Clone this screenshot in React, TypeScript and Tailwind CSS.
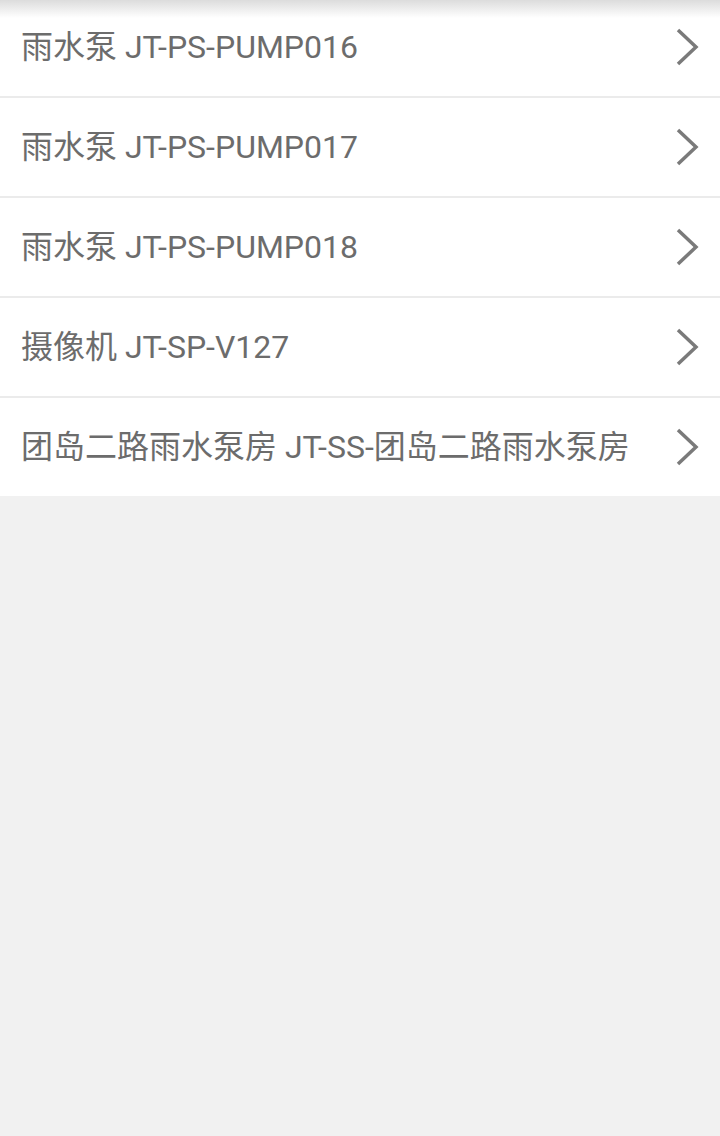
import React from "react";

const items = [
  "雨水泵 JT-PS-PUMP016",
  "雨水泵 JT-PS-PUMP017",
  "雨水泵 JT-PS-PUMP018",
  "摄像机 JT-SP-V127",
  "团岛二路雨水泵房 JT-SS-团岛二路雨水泵房",
];

function Chevron() {
  return (
    <svg width="24" height="38" viewBox="0 0 24 38" className="shrink-0">
      <path d="M3 2 L21 19 L3 36" fill="none" stroke="#7a7a7a" strokeWidth="3.5" strokeLinejoin="miter" />
    </svg>
  );
}

export default function App() {
  return (
    <div
      className="relative min-h-[1136px] w-full bg-[#f1f1f1] overflow-hidden"
      style={{ fontFamily: 'Roboto, "Noto Sans CJK SC", sans-serif' }}
    >
      <div className="pointer-events-none absolute left-0 right-0 top-0 h-[18px] bg-gradient-to-b from-[#dcdcdc] to-transparent z-10" />
      <ul className="-mt-0.5 bg-white">
        {items.map((t) => (
          <li
            key={t}
            className="flex h-[100px] items-center justify-between border-b-2 border-[#ebebeb] pl-[21px] pr-[21px] last:border-[#f1f1f1]"
          >
            <span className="text-[32px] leading-none text-[#6c6c6c] whitespace-nowrap">{t}</span>
            <Chevron />
          </li>
        ))}
      </ul>
    </div>
  );
}
